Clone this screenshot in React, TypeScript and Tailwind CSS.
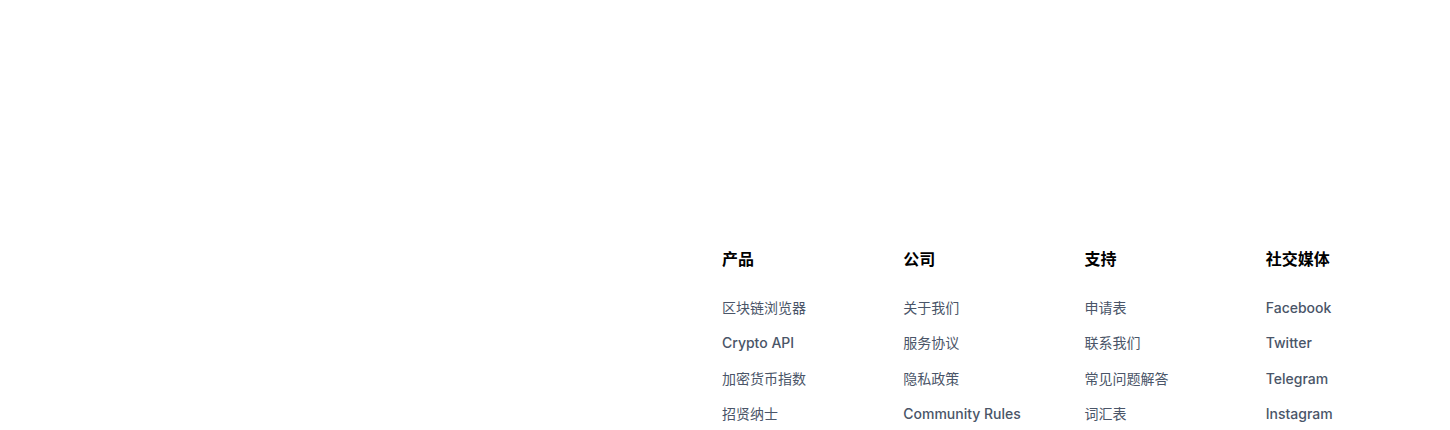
import React from 'react';

const columns = [
  { title: '产品', links: ['区块链浏览器', 'Crypto API', '加密货币指数', '招贤纳士'] },
  { title: '公司', links: ['关于我们', '服务协议', '隐私政策', 'Community Rules'] },
  { title: '支持', links: ['申请表', '联系我们', '常见问题解答', '词汇表'] },
  { title: '社交媒体', links: ['Facebook', 'Twitter', 'Telegram', 'Instagram'] },
];

const isLatin = (s: string) => /^[\x00-\x7f]+$/.test(s);

export default function App() {
  return (
    <footer
      className="w-full h-[430px] overflow-hidden bg-white"
      style={{ fontFamily: 'Inter, "Noto Sans CJK SC", sans-serif' }}
    >
      <div className="flex pt-[247px]">
        {/* left side (logo area) left empty */}
        <div className="flex-1" />
        <div className="grid grid-cols-4 w-[725px] mr-[3px]">
          {columns.map((col) => (
            <div key={col.title} className="flex flex-col">
              <h4 className="text-base leading-6 font-bold text-black">{col.title}</h4>
              <ul className="mt-[27px] flex flex-col gap-[15.3px]">
                {col.links.map((link) => (
                  <li key={link} className="leading-5">
                    <a
                      href="#"
                      className={`block text-sm leading-5 text-[#4a5568] ${isLatin(link) ? 'font-medium' : 'font-normal'}`}
                    >
                      {link}
                    </a>
                  </li>
                ))}
              </ul>
            </div>
          ))}
        </div>
      </div>
    </footer>
  );
}
